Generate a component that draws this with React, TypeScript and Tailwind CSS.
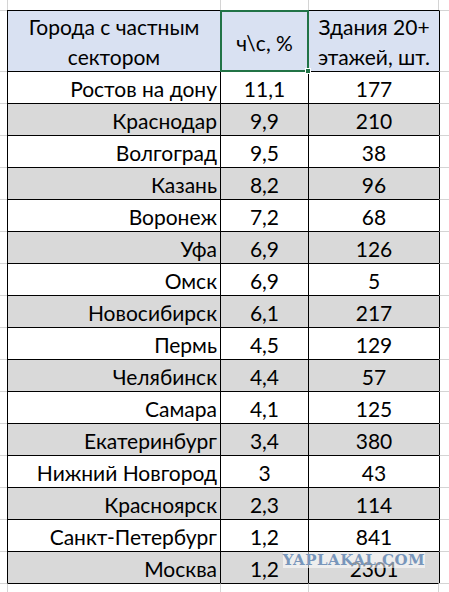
const rows: [string, string, string][] = [
  ['Ростов на дону', '11,1', '177'],
  ['Краснодар', '9,9', '210'],
  ['Волгоград', '9,5', '38'],
  ['Казань', '8,2', '96'],
  ['Воронеж', '7,2', '68'],
  ['Уфа', '6,9', '126'],
  ['Омск', '6,9', '5'],
  ['Новосибирск', '6,1', '217'],
  ['Пермь', '4,5', '129'],
  ['Челябинск', '4,4', '57'],
  ['Самара', '4,1', '125'],
  ['Екатеринбург', '3,4', '380'],
  ['Нижний Новгород', '3', '43'],
  ['Красноярск', '2,3', '114'],
  ['Санкт-Петербург', '1,2', '841'],
  ['Москва', '1,2', '2301'],
];

const App = () => {
  return (
    <div className="relative w-[449px] h-[592px] overflow-hidden bg-white text-[21px] leading-none text-black font-['Lato',sans-serif]">
      <div className="grid grid-cols-[7px_213px_88px_131px_10px] grid-rows-[10px_61px_repeat(16,32px)_9px]">
        {/* верхняя полоса сетки */}
        <div />
        <div className="border-l border-[#d4d4d4]" />
        <div className="border-l border-[#d4d4d4]" />
        <div className="border-l border-r border-[#d4d4d4]" />
        <div />

        {/* шапка */}
        <div className="border-t border-[#d4d4d4]" />
        <div className="flex flex-col items-center justify-center gap-[9px] pt-[1px] border-l border-t border-black bg-[#d9e1f2]">
          <span>Города с частным</span>
          <span>сектором</span>
        </div>
        <div className="relative flex items-center justify-center pt-[2px] border-l border-t border-black bg-[#d9e1f2]">
          <span>ч\с, %</span>
          <div className="absolute -left-px -top-px -right-px -bottom-px border-2 border-[#217346]" />
          <div className="absolute -right-[3px] -bottom-[3px] w-[6px] h-[6px] bg-[#217346] border border-white" />
        </div>
        <div className="flex flex-col items-center justify-center gap-[9px] pt-[1px] border-l border-t border-black bg-[#d9e1f2]">
          <span>Здания 20+</span>
          <span>этажей, шт.</span>
        </div>
        <div className="border-l border-t border-l-black border-t-[#d4d4d4]" />

        {rows.map(([city, share, count], i) => {
          const bg = i % 2 === 1 ? 'bg-[#d9d9d9]' : 'bg-white';
          return [
            <div key={`a${i}`} className="border-t border-[#d4d4d4]" />,
            <div key={`b${i}`} className={`flex items-center justify-end pr-[3px] pt-[2px] border-l border-t border-black ${bg}`}>
              {city}
            </div>,
            <div key={`c${i}`} className={`flex items-center justify-center pt-[2px] border-l border-t border-black ${bg}`}>
              {share}
            </div>,
            <div key={`d${i}`} className={`flex items-center justify-center pt-[2px] border-l border-t border-black ${bg}`}>
              {count}
            </div>,
            <div key={`e${i}`} className="border-l border-t border-l-black border-t-[#d4d4d4]" />,
          ];
        })}

        {/* нижняя полоса сетки */}
        <div className="border-t border-[#d4d4d4]" />
        <div className="border-l border-t border-l-[#d4d4d4] border-t-black" />
        <div className="border-l border-t border-l-[#d4d4d4] border-t-black" />
        <div className="border-l border-r border-t border-l-[#d4d4d4] border-r-[#d4d4d4] border-t-black" />
        <div className="border-t border-[#d4d4d4]" />
      </div>

      {/* водяной знак */}
      <div className="absolute left-[283px] top-[552px] w-[142px] h-[16px] flex items-center justify-center bg-white/55">
        <span className="text-[15px] font-bold tracking-[0.5px] text-[#7896bb] font-['DejaVu_Serif',serif]">YAPLAKAL.COM</span>
      </div>
    </div>
  );
};

export default App;
